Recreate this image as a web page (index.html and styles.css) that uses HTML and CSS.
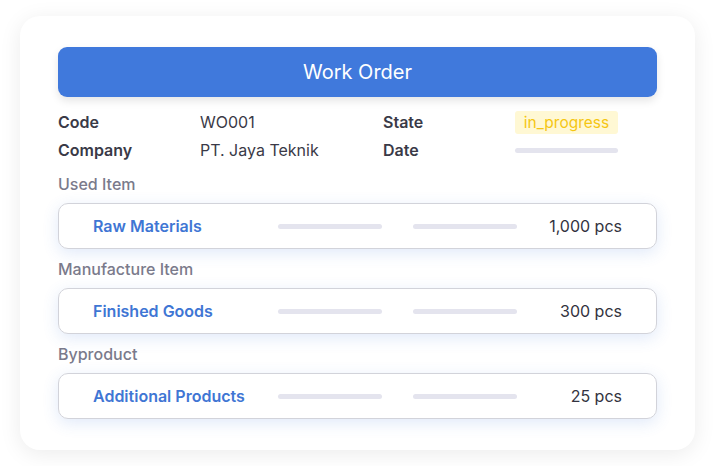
FILE: index.html
```html
<!DOCTYPE html>
<html>
<head>
<meta charset="utf-8">
<link rel="stylesheet" href="styles.css">
</head>
<body>
<div class="card">
  <div class="header">Work Order</div>
  <div class="info">
    <div class="label">Code</div>
    <div class="value">WO001</div>
    <div class="label">State</div>
    <div class="value"><span class="badge">in_progress</span></div>
    <div class="label">Company</div>
    <div class="value">PT. Jaya Teknik</div>
    <div class="label">Date</div>
    <div class="value"><span class="bar date-bar"></span></div>
  </div>
  <div class="section-title">Used Item</div>
  <div class="item">
    <div class="name">Raw Materials</div>
    <span class="bar"></span>
    <span class="bar"></span>
    <div class="qty">1,000 pcs</div>
  </div>
  <div class="section-title">Manufacture Item</div>
  <div class="item">
    <div class="name">Finished Goods</div>
    <span class="bar"></span>
    <span class="bar"></span>
    <div class="qty">300 pcs</div>
  </div>
  <div class="section-title">Byproduct</div>
  <div class="item">
    <div class="name">Additional Products</div>
    <span class="bar"></span>
    <span class="bar"></span>
    <div class="qty">25 pcs</div>
  </div>
</div>
</body>
</html>
```
FILE: styles.css
```css
* { box-sizing: border-box; }
html, body { margin: 0; background: #ffffff; }
body {
  padding: 16px 20px;
  font-family: Inter, "Noto Sans", sans-serif;
}
.card {
  width: 675px;
  height: 434px;
  background: #ffffff;
  border-radius: 20px;
  box-shadow: 0 4px 22px rgba(0, 0, 0, 0.08);
  padding: 31px 38px 0 38px;
}
.header {
  height: 50px;
  background: #4079dc;
  border-radius: 9px;
  color: #ffffff;
  font-size: 20px;
  display: flex;
  align-items: center;
  justify-content: center;
  box-shadow: 0 4px 8px rgba(0, 0, 0, 0.10);
}
.info {
  display: grid;
  grid-template-columns: 142px 183px 132px 1fr;
  grid-auto-rows: 28px;
  margin-top: 11px;
  align-items: center;
  font-size: 16px;
}
.label { font-weight: 600; color: #3a3a47; }
.value { color: #3a3a47; display: flex; align-items: center; }
.badge {
  display: inline-flex;
  align-items: center;
  justify-content: center;
  height: 23px;
  width: 103px;
  background: #fff8d4;
  color: #f5c612;
  border-radius: 3px;
  font-size: 15.5px;
}
.bar {
  display: block;
  height: 5px;
  width: 104px;
  background: #e4e4ee;
  border-radius: 3px;
}
.date-bar { width: 103px; }
.section-title {
  font-size: 16px;
  font-weight: 500;
  color: #7a7a8b;
  height: 20px;
  line-height: 20px;
  margin-top: 10px;
}
.item {
  margin-top: 9px;
  height: 46px;
  border: 1px solid #d2d3da;
  border-radius: 10px;
  box-shadow: 0 4px 16px rgba(64, 121, 220, 0.16);
  display: flex;
  align-items: center;
  padding: 0 34px 0 34px;
}
.item .name {
  width: 185px;
  color: #3f76d4;
  font-weight: 600;
  font-size: 16px;
}
.item .bar + .bar { margin-left: 31px; }
.item .qty {
  margin-left: auto;
  color: #333340;
  font-size: 16px;
}
```
